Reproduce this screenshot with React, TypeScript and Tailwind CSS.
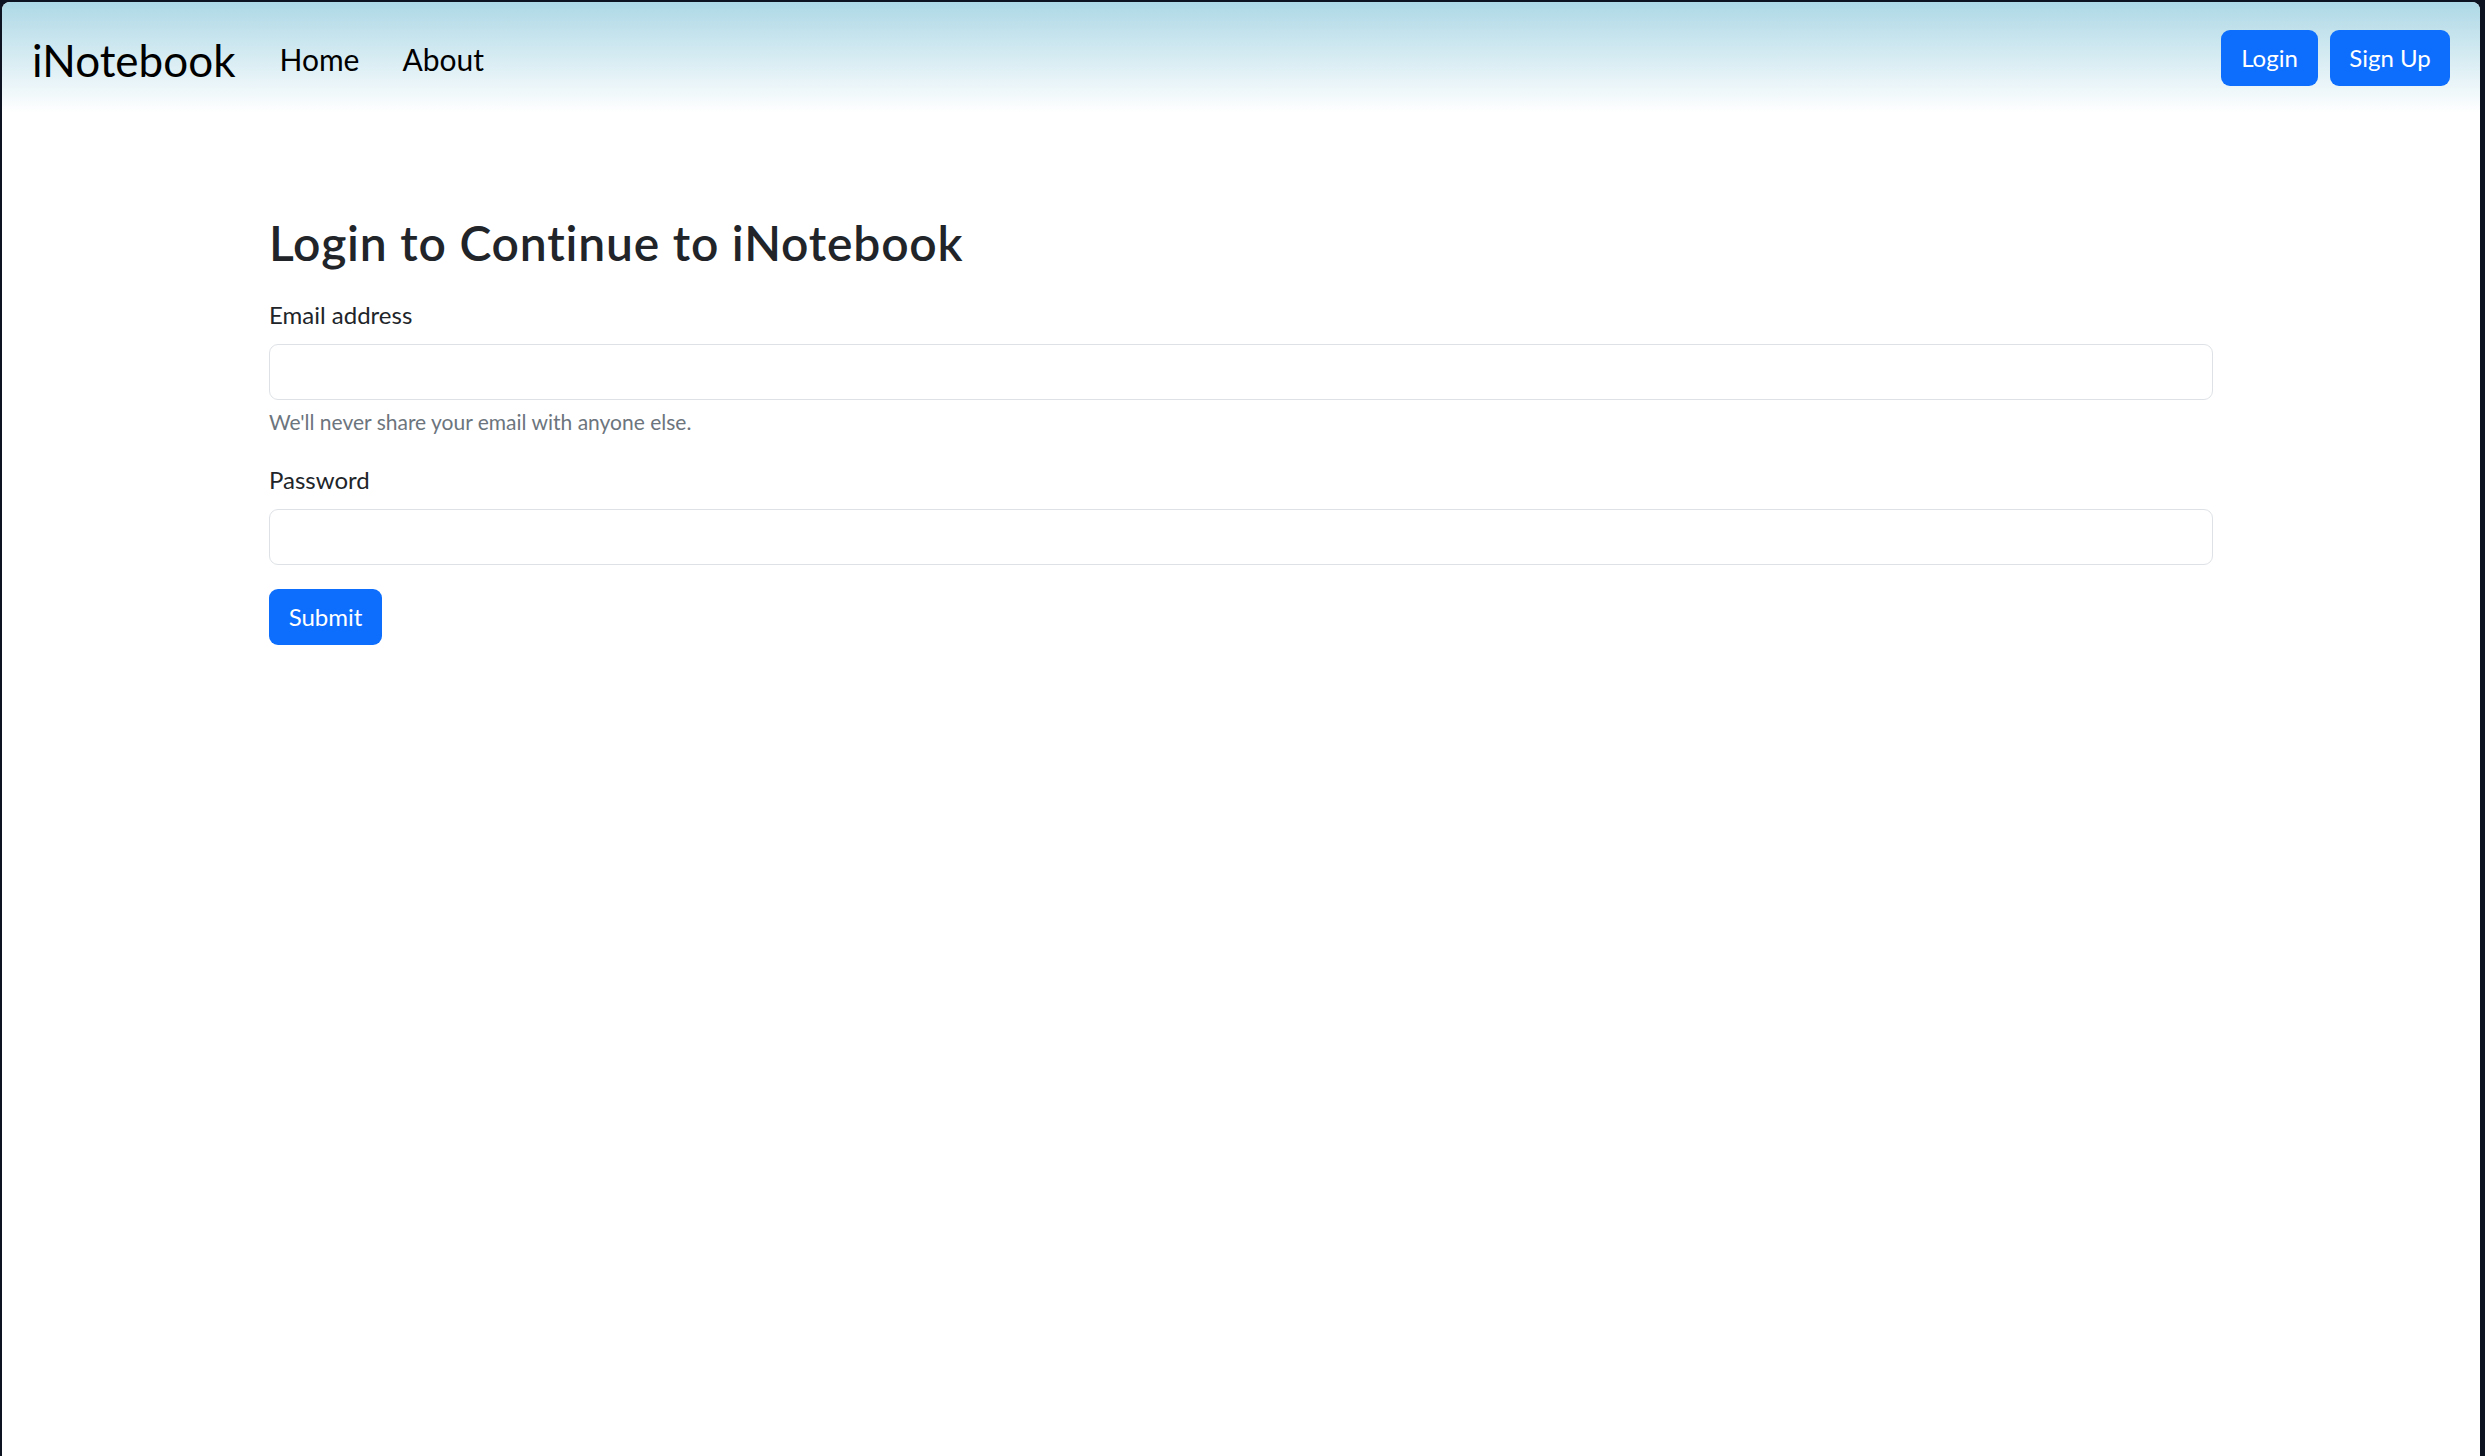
import { useState } from 'react';

const font = { fontFamily: 'Lato, "Noto Sans", sans-serif' };

function Navbar() {
  return (
    <nav className="h-[111px] flex items-center justify-between px-[30px] bg-gradient-to-b from-[#add8e6] to-white rounded-t-[8px]">
      <div className="flex items-center">
        <a href="#" className="text-[44px] leading-[50px] text-black mr-[44px] mt-[4px]">
          iNotebook
        </a>
        <div className="flex items-center gap-[43px] text-[30px] leading-[40px] text-black mt-[2px]">
          <a href="#">Home</a>
          <a href="#">About</a>
        </div>
      </div>
      <div className="flex items-center gap-[12px]">
        <button className="w-[97px] h-[56px] flex items-center justify-center rounded-[9px] bg-[#0d6efd] text-white text-[24px]">
          Login
        </button>
        <button className="w-[120px] h-[56px] flex items-center justify-center rounded-[9px] bg-[#0d6efd] text-white text-[24px]">
          Sign Up
        </button>
      </div>
    </nav>
  );
}

export default function App() {
  const [email, setEmail] = useState('');
  const [password, setPassword] = useState('');

  return (
    <div className="min-h-screen bg-[#0d1321] pt-[2px] pl-[2px] pr-[5px]" style={font}>
      <div className="min-h-[1454px] bg-white rounded-t-[8px] text-[#212529]">
        <Navbar />

        <div className="w-[1944px] mx-auto pt-[101px]">
          <h2 className="text-[48px] leading-[58px] font-semibold tracking-[0.8px] mb-[25px]">
            Login to Continue to iNotebook
          </h2>
          <form onSubmit={e => e.preventDefault()}>
            <div className="mb-[24px]">
              <label htmlFor="email" className="block text-[24px] leading-[36px] mb-[11px]">
                Email address
              </label>
              <input
                id="email"
                type="email"
                value={email}
                onChange={e => setEmail(e.target.value)}
                className="block w-full h-[56px] border border-[#dee2e6] rounded-[9px] px-[18px] text-[24px] outline-none"
              />
              <div className="mt-[6px] text-[21px] leading-[32px] text-[#6c757d]">
                We'll never share your email with anyone else.
              </div>
            </div>
            <div className="mb-[24px]">
              <label htmlFor="password" className="block text-[24px] leading-[36px] mb-[11px]">
                Password
              </label>
              <input
                id="password"
                type="password"
                value={password}
                onChange={e => setPassword(e.target.value)}
                className="block w-full h-[56px] border border-[#dee2e6] rounded-[9px] px-[18px] text-[24px] outline-none"
              />
            </div>
            <button
              type="submit"
              className="w-[113px] h-[56px] flex items-center justify-center rounded-[9px] bg-[#0d6efd] text-white text-[24px]"
            >
              Submit
            </button>
          </form>
        </div>
      </div>
    </div>
  );
}
